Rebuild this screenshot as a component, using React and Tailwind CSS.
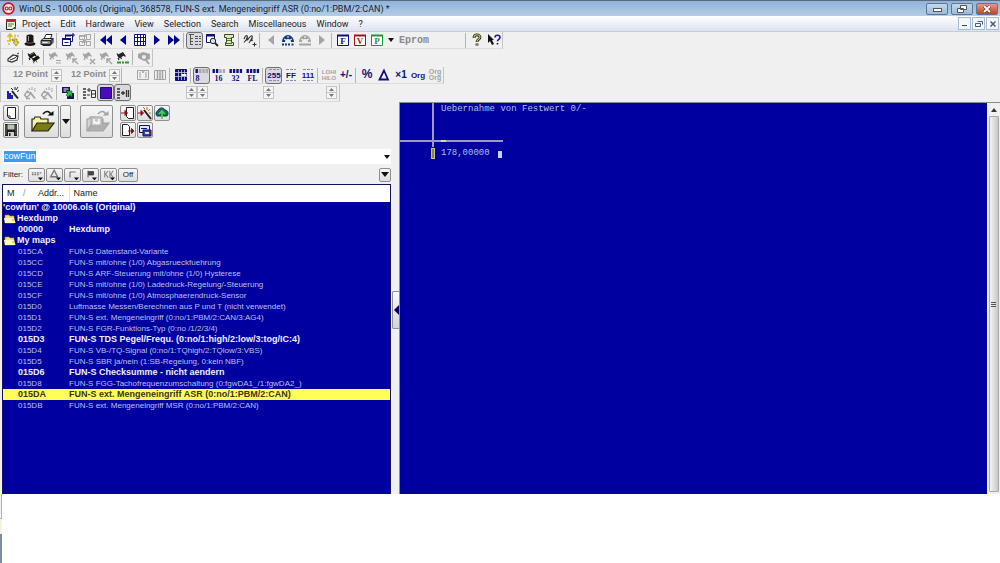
import React from 'react';
import clsx from 'clsx';

const NAVY = '#10107a';
const GRAY = '#a4a4a4';

/* ---------- icons ---------- */

function Ico({ children, className = 'h-[14px] w-[14px]' }) {
  return (
    <svg viewBox="0 0 14 14" className={clsx('shrink-0', className)} fill="none" stroke="none" aria-hidden="true">
      {children}
    </svg>
  );
}

const HandIcon = () => (
  <Ico>
    <path d="M4 1v7M1.500 4L4 1l2.500 3M1 8h4" stroke="#d8c010" strokeWidth="1.600" />
    <path d="M6 6h5v3h2l-3 4-3-4h1.500V7.500H6z" fill="#e8d838" stroke="#8a7a20" strokeWidth=".7" />
    <path d="M9 1.500v3M11 3h2M3 10v2" stroke="#b0a030" />
  </Ico>
);

const HatIcon = () => (
  <Ico>
    <path d="M3.500 3c0-2 7-2 7 0v6.500c3 0 3 3.500-3.500 3.500S.500 9.500 3.500 9.500z" fill="#161616" />
    <path d="M5.500 3v5" stroke="#9a9a9a" />
    <path d="M3.500 9c2 1.500 5 1.500 7 0" stroke="#8a5a20" />
  </Ico>
);

const PrinterIcon = () => (
  <Ico>
    <path d="M4 6l2-4.500h6L10.500 6" fill="#fff" stroke="#222" />
    <path d="M1 7.500L3.500 5.500h9.500L11 7.500z" fill="#c8c8c8" stroke="#222" />
    <path d="M1 7.500h10v4H1zM11 7.500l2-2v4l-2 2z" fill="#8c8c8c" stroke="#222" />
    <path d="M2.500 9.500h5" stroke="#eee" />
    <path d="M2.500 12.500h8" stroke="#222" />
  </Ico>
);

const WindowsIcon = ({ c = NAVY }) => (
  <Ico>
    <path d="M4.500 2.500h7v6h-7z" fill="#fff" stroke={c} />
    <path d="M4 2.500h6" stroke={c} strokeWidth="2" />
    <path d="M1.500 5.500h8v7h-8z" fill="#fff" stroke={c} />
    <path d="M1 6h9" stroke={c} strokeWidth="2" />
    <path d="M3.500 9.500h4" stroke={c} />
    <path d="M12 0v4M10 2h4" stroke={c} />
  </Ico>
);

const MapsIcon = ({ c = GRAY }) => (
  <Ico>
    <path d="M1.500 2.500h5v4h-5zM8.500 1.500h4v5h-4zM1.500 8.500h5v4h-5zM8.500 8.500h4v4h-4z" stroke={c} />
    <path d="M1 3h5M4 6l5 4M9 6l-5 4M7 1v3" stroke={c} strokeWidth="1.300" />
  </Ico>
);

const Arrow = ({ dir, double, c = '#00008c' }) => (
  <Ico>
    <g transform={dir === 'right' ? 'rotate(180 7 7)' : undefined} fill={c}>
      {double ? <path d="M7 2v10L1 7zM13 2v10L7 7z" /> : <path d="M10 2v10L4 7z" />}
    </g>
  </Ico>
);

const GridIcon = ({ solid }) => (
  <Ico>
    <path d="M1.500 1.500h11v11h-11z" fill={solid ? NAVY : '#fff'} stroke={NAVY} />
    <path
      d="M1 4.500h12M1 8.500h12M4.500 2v10M7.500 2v10M10.500 2v10"
      stroke={solid ? '#c8c8e8' : NAVY}
      strokeWidth={solid ? 0.8 : 1}
    />
    {solid && <path d="M7.500 6h5v2h-5z" fill="#fff" />}
  </Ico>
);

const ListIcon = () => (
  <Ico>
    <path d="M1 1.500h5M2.500 2v10M3 5.500h2M3 8.500h2M3 11.500h2" stroke="#555" />
    <path d="M7 3.500h6M7 5.500h6M7 8.500h6M7 11.500h6" stroke="#555" strokeDasharray="3 1" />
  </Ico>
);

const PreviewIcon = () => (
  <Ico>
    <path d="M1.500 1.500h8v8h-8z" fill="#fff" stroke={NAVY} />
    <path d="M1 2.500h9" stroke={NAVY} strokeWidth="2" />
    <circle cx="8" cy="8" r="2.700" fill="#cfe0f4" stroke="#222" />
    <path d="M10 10l3 3" stroke="#222" strokeWidth="1.800" />
  </Ico>
);

const ScrollIcon = () => (
  <Ico>
    <path d="M2.500 1.500h9v3h-2v5h2v3h-8v-3h1v-5h-2z" fill="#dfe8c0" stroke="#3a4a20" />
    <path d="M5 5.500h4M5 7.500h4M4 10.500h6" stroke="#4a7a30" />
  </Ico>
);

const WaveIcon = () => (
  <Ico>
    <path d="M1 6c2-5 4-4 3-1s0 3 2 0 4-3 3 0-1 3 1 2" stroke="#333" strokeWidth="1.200" />
    <path d="M1 9.500l4-5M6 10l3-5M9.500 11.500h4M11.500 9.500v4" stroke="#333" strokeWidth="1.100" />
  </Ico>
);

const BinocularIcon = ({ c = '#123a7a', text }) => (
  <Ico>
    <path d="M1 9c0-4 3-7 6-7s6 3 6 7h-3c0-2-1-3-3-3s-3 1-3 3z" fill={c} />
    <path d="M3 6l2 1M9 7l2-1M7 3v2" stroke="#fff" />
    <path d={text ? 'M1 11.500h2M4 11.500h2M7 11.500h2M10.500 11.500h2' : 'M1 11.500h12'} stroke={c} strokeWidth="2" />
  </Ico>
);

const LetterIcon = ({ ch, c }) => (
  <Ico>
    <path d="M1.500 2.500h11v10h-11z" fill="#fff" stroke={c} />
    <path d="M1 2.500h12" stroke={c} strokeWidth="2" />
    <text x="7" y="11" textAnchor="middle" fontSize="9" fontWeight="700" fontFamily="Liberation Serif, serif" fill={c}>
      {ch}
    </text>
  </Ico>
);

const HelpIcon = ({ pointer }) => (
  <Ico>
    {pointer ? (
      <>
        <path d="M1 1l6 6H5l2 4-2 1-2-4-2 2z" fill="#111" />
        <path d="M8 4.500c0-3 5-3 5 0 0 1.800-2.500 1.800-2.500 3.800M10.500 10v1.500" stroke="#1a1a8c" strokeWidth="1.600" />
      </>
    ) : (
      <>
        <path d="M4 5c0-4 6-4 6-.500 0 2-3 2-3 4.500M7 10.500v2" stroke="#222" strokeWidth="2.800" />
        <path d="M4 4.800c0-4 6-4 6-.500 0 2-3 2-3 4.500M7 11v1" stroke="#cfd060" strokeWidth="1.100" />
      </>
    )}
  </Ico>
);

const PlugIcon = () => (
  <Ico>
    <path d="M2 8l5-4 5 1-1 4-5 2-4-1z" stroke="#333" strokeWidth="1.200" />
    <path d="M4 9l5-2 2-2M11 3l2-1" stroke="#333" />
  </Ico>
);

const ChipIcon = ({ c = GRAY, mark }) => (
  <Ico>
    <path d="M1 4l6-3 2 3-6 3.500z" fill={c} />
    <path d="M2 7l1 2M4.500 6l1 2M8 4l1.500 1.500M1 2.500L2 4" stroke={c} strokeWidth="1.200" />
    {mark === 'eq' && <path d="M8 9.500h5M8 12h5" stroke={c} />}
    {mark === 'x' && <path d="M8 8l5 5M13 8l-5 5" stroke={c} strokeWidth="1.400" />}
    {mark === 'arrow' && <path d="M8 8l5 5M8 12V8h4" stroke={c} strokeWidth="1.400" />}
    {mark === 'go' && <path d="M1 11.500h4M6 11.500h2M9 11.500h4" stroke="#2b9a2b" strokeWidth="2" />}
    {mark === 'double' && (
      <>
        <path d="M5 8l6-3.500 2 2.500-6 4z" fill={c} />
        <path d="M6 10l1 2.500M9 9l1 2.500M3 4l4-2" stroke="#6b7a20" />
      </>
    )}
  </Ico>
);

const FindGray = () => (
  <Ico>
    <path d="M1 3l5-2 7 2v5l-6 2-6-3z" fill={GRAY} />
    <circle cx="7" cy="6" r="2" fill="#eee" />
    <path d="M8 8l4 5" stroke={GRAY} strokeWidth="2" />
  </Ico>
);

const BracketIcon = ({ split }) => (
  <Ico>
    <path d="M1.500 2.500h11v9h-11z" stroke={GRAY} />
    <path d={split ? 'M4.500 3v8M7 3v8M9.500 3v8' : 'M4 4v6M10 4v6M6 3l1 2 1-2'} stroke={GRAY} strokeWidth={split ? 1.5 : 1} />
  </Ico>
);

// bit width icons: row of ticks above a number
const BitsIcon = ({ n, on }) => (
  <Ico className="h-[14px] w-[15px]">
    {[0, 1, 2, 3].map((i) => (
      <path key={i} d={`M${1 + i * 3.4} 1h2.400v4h-2.400z`} fill={i < on ? NAVY : '#a9a9a9'} />
    ))}
    <text
      x={n === '8' ? 3 : 7}
      y="13"
      textAnchor="middle"
      fontSize="8"
      fontWeight="700"
      fontFamily="Liberation Serif, serif"
      fill={NAVY}
    >
      {n}
    </text>
  </Ico>
);

const MiniText = ({ lines, c = NAVY, size = 8 }) => (
  <Ico className="h-[14px] w-[14px] overflow-visible">
    {lines.map((t, i) => (
      <text
        key={i}
        x="7"
        y={lines.length === 1 ? 10 : 6 + i * 6}
        textAnchor="middle"
        fontSize={size}
        fontWeight="700"
        fontFamily="Liberation Sans, sans-serif"
        fill={c}
      >
        {t}
      </text>
    ))}
  </Ico>
);

const NumberIcon = ({ t }) => (
  <Ico className="h-[14px] w-[14px] overflow-visible">
    <path d="M2 1.500h10M2 12.500h10" stroke="#8a8aa8" strokeDasharray="3 1" />
    <text x="7" y="10" textAnchor="middle" fontSize="8" fontWeight="700" fontFamily="Liberation Sans, sans-serif" fill={NAVY}>
      {t}
    </text>
  </Ico>
);

const WandIcon = ({ c = '#222', a = '#2020b8' }) => (
  <Ico>
    <path d="M1 5h2v2h2v2h2v4H1z" fill={a} />
    <path d="M6 5l6 7.500" stroke={c} strokeWidth="2" />
    <path d="M9 1v3M11 5.500l2-1M5 2l2 2M10 4l2-3" stroke={c} />
  </Ico>
);

const WandOffIcon = () => (
  <Ico>
    <path d="M1.500 9l3-4 3 3-4 3.500zM3 12.500h4" stroke={GRAY} strokeWidth="1.400" />
    <path d="M7 6l5 6.500" stroke={GRAY} strokeWidth="2" />
    <path d="M9 1v3M11 5.500l2-1M6 2l1 2M10.500 4l2-2" stroke={GRAY} />
  </Ico>
);

const CopyGreen = () => (
  <Ico>
    <path d="M1 1h8v6H1z" fill="#151550" />
    <path d="M2.500 3h5M2.500 5h3" stroke="#fff" />
    <path d="M6 7h7v6H6z" fill="#151550" />
    <path d="M5 5h6v6L9 9l-2 2-2-2 2-2z" fill="#2cc040" stroke="#0a5a1a" strokeWidth=".6" />
  </Ico>
);

const ColsIcon = ({ plus }) => (
  <Ico>
    <path d="M1 3h3M1 6h3M1 9h3M1 12h3" stroke="#333" strokeWidth="1.600" />
    {plus ? (
      <path d="M5 7h4M7 5v4M10.500 4v7M12.500 4v7" stroke="#333" strokeWidth="1.300" />
    ) : (
      <>
        <path d="M5 4h4M7 2v4M5 9h3" stroke="#333" />
        <path d="M9.500 4.500h4v7h-4zM9.500 8h4" stroke="#333" />
      </>
    )}
  </Ico>
);

const SquareIcon = () => (
  <Ico>
    <path d="M1.500 1.500h11v11h-11z" fill="#4a0cb8" stroke="#14147a" />
  </Ico>
);

const PageIcon = () => (
  <Ico>
    <path d="M3.500 1.500h8v11H5.500l-2-2z" fill="#fff" stroke="#222" />
    <path d="M3.500 10h2.500v2.500" stroke="#222" />
  </Ico>
);

const DiskIcon = () => (
  <Ico>
    <path d="M1 1h12v12H1z" fill="#1c1c1c" />
    <path d="M3.500 1.500h7v5h-7z" fill="#b8c4b0" />
    <path d="M4 9h6v4H4z" fill="#d0d0d0" />
    <path d="M5 10h1.500v3H5z" fill="#222" />
    <path d="M2 2v10M12 2v10" stroke="#6b7050" />
  </Ico>
);

const OpenIcon = ({ off }) => (
  <svg viewBox="0 0 26 26" className="h-[26px] w-[26px]" fill="none" aria-hidden="true">
    <path d="M14 5c3-4 7-3 8 1" stroke={off ? GRAY : '#111'} strokeWidth="1.500" />
    <path d="M18.500 6.500h6V2z" fill={off ? GRAY : '#111'} />
    <path d="M3 22V10h2l1-2h5l1 2h7v4" fill={off ? '#d4d4d4' : '#f6f3a0'} stroke={off ? GRAY : '#222'} strokeWidth="1.200" />
    <path d="M3 22l5-8h17l-6 8z" fill={off ? '#b0b0b0' : '#7c7a14'} stroke={off ? GRAY : '#222'} strokeWidth="1.200" />
    {off && <path d="M7 8h11v9H7z" fill="#c8c8c8" stroke={GRAY} />}
    {off && <path d="M10 10v5M15 10v5M10 12.500l2.500 2 2.500-2" stroke="#fff" strokeWidth="1.400" />}
  </svg>
);

const ImportIcon = ({ out }) => (
  <Ico>
    <path d={out ? 'M1.500 1.500h5l2 2v9h-7z' : 'M5.500 1.500h7v11h-5l-2-2z'} fill="#fff" stroke="#222" />
    {out ? (
      <path d="M7 8h4M13 8l-2.500-2.500v5z" stroke="#8a1020" fill="#8a1020" />
    ) : (
      <path d="M0 7h4M6.500 7L4 4.500v5z" stroke="#8a1020" fill="#8a1020" />
    )}
  </Ico>
);

const MagicIcon = () => (
  <Ico>
    <path d="M0 7h3M5.500 7L3 4.500v5z" stroke="#8a1020" fill="#8a1020" />
    <path d="M6 4l7 9" stroke="#222" strokeWidth="2" />
    <path d="M9 1v3M12 3l-2 2M13 7h-2M5 1l2 2" stroke="#b07a20" />
  </Ico>
);

const CloudIcon = () => (
  <Ico>
    <path d="M1 8c0-3 2-3 3-5 2-2 5-1 6 1 3 0 4 4 2 6H2z" fill="#0f6a70" stroke="#0a3a40" />
    <path d="M7 6v7M4 8l3-3 3 3" stroke="#56d040" strokeWidth="1.600" />
  </Ico>
);

const MailIcon = () => (
  <Ico>
    <path d="M1.500 2.500h10v7h-10z" fill="#dfe6ff" stroke={NAVY} />
    <path d="M3 5.500h6" stroke={NAVY} />
    <path d="M5 7h8v6H5z" fill="#304a9a" stroke={NAVY} />
    <path d="M7 10h4" stroke="#fff" strokeWidth="1.600" />
    <path d="M11 8l2 2-2 2" stroke="#8a1020" />
  </Ico>
);

const FolderIcon = () => (
  <svg viewBox="0 0 12 10" className="h-[10px] w-[12px] shrink-0" aria-hidden="true">
    <path d="M1 1h4l1 1h4v7H1z" fill="#f4e468" stroke="#a08a20" strokeWidth=".6" />
    <path d="M0 4h10l1.500 5H1z" fill="#fffbc0" />
    <path d="M8 6h3" stroke="#c0a830" />
  </svg>
);

const Caret = ({ up, c = '#111' }) => (
  <svg viewBox="0 0 8 5" className="h-[5px] w-[8px]" aria-hidden="true">
    <path d={up ? 'M0 5h8L4 0z' : 'M0 0h8L4 5z'} fill={c} />
  </svg>
);

/* ---------- toolbar pieces ---------- */

function Tool({ label, pressed, disabled, children }) {
  return (
    <button
      type="button"
      aria-label={label}
      disabled={disabled}
      className={clsx(
        'flex h-[17px] w-[17px] shrink-0 items-center justify-center',
        pressed && 'rounded-[3px] border border-[#6f6f6f] bg-[#d9d9de]'
      )}
    >
      {children}
    </button>
  );
}

const Sep = () => <span className="mr-[2px] ml-[1px] h-[15px] w-px shrink-0 bg-[#b4b4b4]" />;

function Bar({ label, children }) {
  return (
    <div
      role="toolbar"
      aria-label={label}
      className="flex h-full w-max items-center border-r border-b border-[#c4c4c4] border-b-[#dcdcdc] pl-[3px]"
    >
      {children}
    </div>
  );
}

function Spinner({ label }) {
  return (
    <span className="flex h-[13px] w-[11px] shrink-0 flex-col border border-[#c4c4c4] bg-[#f4f4f4]">
      <button type="button" disabled aria-label={`${label} up`} className="flex flex-1 items-center justify-center">
        <svg viewBox="0 0 5 3" className="h-[3px] w-[5px]"><path d="M0 3h5L2.500 0z" fill="#777" /></svg>
      </button>
      <button
        type="button"
        disabled
        aria-label={`${label} down`}
        className="flex flex-1 items-center justify-center border-t border-[#c4c4c4]"
      >
        <svg viewBox="0 0 5 3" className="h-[3px] w-[5px]"><path d="M0 0h5L2.500 3z" fill="#777" /></svg>
      </button>
    </span>
  );
}

function PointField({ label }) {
  return (
    <div className="ml-[9px] flex items-center gap-[1px]">
      <input
        aria-label={label}
        disabled
        defaultValue="12 Point"
        className="w-[37px] bg-transparent text-[9px] font-bold text-[#8a8a8a]"
      />
      <Spinner label={label} />
    </div>
  );
}

function SideButton({ label, className, children }) {
  return (
    <button
      type="button"
      aria-label={label}
      className={clsx(
        'flex items-center justify-center rounded-[2px] border border-[#8f8f8f] bg-linear-to-b from-[#f6f6f6] to-[#dedede]',
        className
      )}
    >
      {children}
    </button>
  );
}

/* ---------- window parts ---------- */

function TitleBar() {
  const btn = 'flex h-[12px] w-[22px] items-center justify-center rounded-[2px] border border-[#5f7690]';
  return (
    <header className="flex h-[16px] items-center border-t border-[#5a6b80] bg-linear-to-b from-[#8fb4dc] to-[#b4cce6] pr-[2px] pl-[2px]">
      <svg viewBox="0 0 14 14" className="h-[13px] w-[13px]" aria-hidden="true">
        <circle cx="7" cy="7" r="5.800" fill="#f6e6e6" stroke="#c01828" strokeWidth="1.800" />
        <circle cx="5" cy="7" r="1.600" fill="none" stroke="#c01828" strokeWidth="1.200" />
        <circle cx="9" cy="7" r="1.600" fill="none" stroke="#c01828" strokeWidth="1.200" />
      </svg>
      <h1 className="ml-[4px] font-[Roboto,sans-serif] text-[9px] leading-[14px] whitespace-nowrap text-[#1a2430]">
        WinOLS - 10006.ols (Original), 368578, FUN-S ext. Mengeneingriff ASR (0:no/1:PBM/2:CAN) *
      </h1>
      <div className="ml-auto flex gap-[3px]">
        <button type="button" aria-label="Minimize" className={clsx(btn, 'bg-linear-to-b from-[#c4d8ec] to-[#9cbad8]')}>
          <span className="mt-[3px] h-[4px] w-[9px] border border-[#555] bg-white" />
        </button>
        <button type="button" aria-label="Restore" className={clsx(btn, 'bg-linear-to-b from-[#c4d8ec] to-[#9cbad8]')}>
          <svg viewBox="0 0 10 8" className="h-[8px] w-[10px]">
            <path d="M3.500.500h6v4h-6zM.500 3.500h6v4h-6z" fill="#fff" stroke="#555" />
          </svg>
        </button>
        <button type="button" aria-label="Close" className={clsx(btn, 'bg-linear-to-b from-[#e09a88] to-[#c04028]')}>
          <svg viewBox="0 0 10 8" className="h-[8px] w-[10px]">
            <path d="M2 1l6 6M8 1L2 7" stroke="#5a2018" strokeWidth="3" />
            <path d="M2 1l6 6M8 1L2 7" stroke="#fff" strokeWidth="1.800" />
          </svg>
        </button>
      </div>
    </header>
  );
}

const MENU = ['Project', 'Edit', 'Hardware', 'View', 'Selection', 'Search', 'Miscellaneous', 'Window', '?'];

function MenuBar() {
  const btn = 'flex h-[13px] w-[13px] items-center justify-center border border-[#a8bcd4] bg-[#f4f8fc]';
  return (
    <nav className="flex h-[16px] items-center border-b border-[#c8ccd8] bg-linear-to-b from-white to-[#dde2f0] pr-[1px] pl-[5px]">
      <svg viewBox="0 0 12 12" className="h-[12px] w-[12px]" aria-hidden="true">
        <path d="M1.500 1.500h9v7l-3 3h-6z" fill="#eef0d8" stroke="#222" />
        <path d="M1 1h10v3H1z" fill="#b82838" />
        <path d="M3 6h6M3 8h4" stroke="#3a8a3a" />
        <path d="M7 11l4-3v3z" fill="#2a6a2a" />
      </svg>
      <ul className="ml-[5px] flex gap-[10px] font-[Roboto,sans-serif] text-[9px] leading-[14px] text-[#222]">
        {MENU.map((m) => (
          <li key={m}>
            <button type="button">{m}</button>
          </li>
        ))}
      </ul>
      <div className="ml-auto flex gap-[1px]">
        <button type="button" aria-label="Minimize document" className={btn}>
          <span className="mt-[4px] h-px w-[5px] bg-[#444]" />
        </button>
        <button type="button" aria-label="Restore document" className={btn}>
          <svg viewBox="0 0 8 8" className="h-[8px] w-[8px]">
            <path d="M2.500 1.500h5v3M.500 3.500h5v3h-5z" fill="none" stroke="#4a5a70" />
          </svg>
        </button>
        <button type="button" aria-label="Close document" className={btn}>
          <svg viewBox="0 0 8 8" className="h-[8px] w-[8px]">
            <path d="M1.500 1.500l5 5M6.500 1.500l-5 5" stroke="#4a5a70" strokeWidth="1.500" />
          </svg>
        </button>
      </div>
    </nav>
  );
}

function Toolbars() {
  return (
    <div className="grid grid-rows-[17px_18px_17px_18px] border-l border-[#c4c4c4] bg-[#f0f0f0]">
      <Bar label="Standard">
        <Tool label="Import"><HandIcon /></Tool>
        <Tool label="Wizard"><HatIcon /></Tool>
        <Tool label="Print"><PrinterIcon /></Tool>
        <Sep />
        <Tool label="Windows"><WindowsIcon /></Tool>
        <Tool label="Compare" disabled><MapsIcon /></Tool>
        <Sep />
        <Tool label="First"><Arrow dir="left" double /></Tool>
        <Tool label="Previous"><Arrow dir="left" /></Tool>
        <Tool label="Table"><GridIcon /></Tool>
        <Tool label="Next"><Arrow dir="right" /></Tool>
        <Tool label="Last"><Arrow dir="right" double /></Tool>
        <Sep />
        <Tool label="Map list" pressed><ListIcon /></Tool>
        <Tool label="Preview"><PreviewIcon /></Tool>
        <Tool label="Script"><ScrollIcon /></Tool>
        <Sep />
        <Tool label="Signature"><WaveIcon /></Tool>
        <Sep />
        <Tool label="Find previous" disabled><Arrow dir="left" c={GRAY} /></Tool>
        <Tool label="Find map"><BinocularIcon text /></Tool>
        <Tool label="Find again" disabled><BinocularIcon c={GRAY} /></Tool>
        <Tool label="Find next" disabled><Arrow dir="right" c={GRAY} /></Tool>
        <Sep />
        <Tool label="Factor"><LetterIcon ch="F" c={NAVY} /></Tool>
        <Tool label="Value"><LetterIcon ch="V" c="#a01414" /></Tool>
        <Tool label="Parameter"><LetterIcon ch="P" c="#1c9a2c" /></Tool>
        <button type="button" aria-label="More" className="flex w-[11px] justify-center">
          <svg viewBox="0 0 6 4" className="h-[4px] w-[6px]"><path d="M0 0h6L3 4z" fill="#111" /></svg>
        </button>
        <span className="w-[68px] pl-[3px] font-['Liberation_Mono',monospace] text-[10px] font-bold text-[#8a8a8a]">Eprom</span>
        <Sep />
        <Tool label="Help"><HelpIcon /></Tool>
        <Tool label="Context help"><HelpIcon pointer /></Tool>
      </Bar>

      <Bar label="Hardware">
        <Tool label="Connect"><PlugIcon /></Tool>
        <Sep />
        <Tool label="Read chip"><ChipIcon c="#151515" mark="double" /></Tool>
        <Sep />
        <Tool label="Verify chip" disabled><ChipIcon mark="eq" /></Tool>
        <Tool label="Program chip" disabled><ChipIcon mark="arrow" /></Tool>
        <Tool label="Erase chip" disabled><ChipIcon mark="x" /></Tool>
        <Tool label="Send chip" disabled><ChipIcon mark="arrow" /></Tool>
        <Tool label="Chip range"><ChipIcon c="#222" mark="go" /></Tool>
        <Sep />
        <Tool label="Find chip" disabled><FindGray /></Tool>
      </Bar>

      <Bar label="View">
        <PointField label="Font size" />
        <PointField label="Column size" />
        <Sep />
        <span className="w-[10px]" />
        <Tool label="Fit" disabled><BracketIcon /></Tool>
        <Tool label="Split" disabled><BracketIcon split /></Tool>
        <Sep />
        <Tool label="Grid"><GridIcon solid /></Tool>
        <Sep />
        <Tool label="8 bit" pressed><BitsIcon n="8" on={1} /></Tool>
        <Tool label="16 bit"><BitsIcon n="16" on={2} /></Tool>
        <Tool label="32 bit"><BitsIcon n="32" on={4} /></Tool>
        <Tool label="Float"><BitsIcon n="FL" on={4} /></Tool>
        <Sep />
        <Tool label="Decimal" pressed><NumberIcon t="255" /></Tool>
        <Tool label="Hex"><NumberIcon t="FF" /></Tool>
        <Tool label="Binary"><NumberIcon t="111" /></Tool>
        <Sep />
        <Tool label="Byte order" disabled><MiniText lines={['LOHI', 'HILO']} c={GRAY} size={6} /></Tool>
        <Tool label="Sign"><MiniText lines={['+/-']} size={10} /></Tool>
        <Sep />
        <Tool label="Percent"><MiniText lines={['%']} size={12} /></Tool>
        <Tool label="Difference">
          <Ico><path d="M7 2.500L2.500 11.500h8.500z" stroke={NAVY} strokeWidth="1.800" /></Ico>
        </Tool>
        <Tool label="Times one"><MiniText lines={['×1']} size={10} /></Tool>
        <Tool label="Original"><MiniText lines={['Org']} size={8} /></Tool>
        <Tool label="Original of original" disabled><MiniText lines={['Org', 'Org']} c={GRAY} size={7} /></Tool>
      </Bar>

      <Bar label="Edit">
        <Tool label="Potential maps"><WandIcon /></Tool>
        <Tool label="Wand" disabled><WandOffIcon /></Tool>
        <Tool label="Wand all" disabled><WandOffIcon /></Tool>
        <Sep />
        <Tool label="Copy map"><CopyGreen /></Tool>
        <Sep />
        <Tool label="Columns"><ColsIcon /></Tool>
        <Tool label="Background" pressed><SquareIcon /></Tool>
        <Tool label="Insert columns" pressed><ColsIcon plus /></Tool>
        <div className="ml-[55px] flex">
          <Spinner label="Width" />
          <Spinner label="Height" />
        </div>
        <div className="ml-[55px] flex"><Spinner label="Offset" /></div>
        <div className="mr-[2px] ml-[52px] flex"><Spinner label="Step" /></div>
      </Bar>
    </div>
  );
}

const ROWS = [
  ['015CA', 'FUN-S Datenstand-Variante'],
  ['015CC', 'FUN-S mit/ohne (1/0) Abgasrueckfuehrung'],
  ['015CD', 'FUN-S ARF-Steuerung mit/ohne (1/0) Hysterese'],
  ['015CE', 'FUN-S mit/ohne (1/0) Ladedruck-Regelung/-Steuerung'],
  ['015CF', 'FUN-S mit/ohne (1/0) Atmosphaerendruck-Sensor'],
  ['015D0', 'Luftmasse Messen/Berechnen aus P und T (nicht verwendet)'],
  ['015D1', 'FUN-S ext. Mengeneingriff (0:no/1:PBM/2:CAN/3:AG4)'],
  ['015D2', 'FUN-S FGR-Funktions-Typ (0:no /1/2/3/4)'],
  ['015D3', 'FUN-S TDS Pegel/Frequ. (0:no/1:high/2:low/3:tog/IC:4)', 'bold'],
  ['015D4', 'FUN-S VB-/TQ-Signal (0:no/1:TQhigh/2:TQlow/3:VBS)'],
  ['015D5', 'FUN-S SBR ja/nein (1:SB-Regelung, 0:kein NBF)'],
  ['015D6', 'FUN-S Checksumme - nicht aendern', 'bold'],
  ['015D8', 'FUN-S FGG-Tachofrequenzumschaltung (0:fgwDA1_/1:fgwDA2_)'],
  ['015DA', 'FUN-S ext. Mengeneingriff ASR (0:no/1:PBM/2:CAN)', 'selected'],
  ['015DB', 'FUN-S ext. Mengeneingriff MSR (0:no/1:PBM/2:CAN)'],
];

function GroupRow({ children }) {
  return (
    <tr className="h-[11px] font-bold text-[#f0f0fc]">
      <td colSpan={2} className="p-0">
        <div className="flex h-[11px] items-center">{children}</div>
      </td>
    </tr>
  );
}

function MapList() {
  return (
    <div className="ml-[2px] flex flex-1 flex-col border-x border-t border-[#14145a] bg-[#0000a0]">
      <table className="w-full table-fixed border-collapse text-left leading-[11px] whitespace-nowrap">
        <colgroup>
          <col className="w-[66px]" />
          <col />
        </colgroup>
        <thead>
          <tr className="h-[17px] bg-white text-[9px] text-[#222]">
            <th className="border-r border-[#e0e0e8] p-0 font-normal">
              <span className="flex pl-[4px]">
                <span className="w-[16px]">M</span>
                <span className="w-[15px] text-[#999]">/</span>
                <span>Addr...</span>
              </span>
            </th>
            <th className="p-0 pl-[4px] font-normal">Name</th>
          </tr>
        </thead>
        <tbody className="text-[9px]">
          <GroupRow>'cowfun' @ 10006.ols (Original)</GroupRow>
          <GroupRow><span className="mr-[1px] ml-[1px]"><FolderIcon /></span>Hexdump</GroupRow>
          <tr className="h-[11px] font-bold text-[#f0f0fc]">
            <td className="p-0 pl-[15px]">00000</td>
            <td className="p-0">Hexdump</td>
          </tr>
          <GroupRow><span className="mr-[1px] ml-[1px]"><FolderIcon /></span>My maps</GroupRow>
          {ROWS.map(([addr, name, kind]) => (
            <tr
              key={addr}
              className={clsx(
                'h-[11px]',
                kind && 'font-bold',
                kind === 'bold' && 'text-[#f0f0fc]',
                kind === 'selected' && 'bg-[#ffff58] text-[#3a3410]',
                !kind && 'text-[8px] text-[#bcc0ec]'
              )}
            >
              <td className="p-0 pl-[15px]">{addr}</td>
              <td className="p-0">{name}</td>
            </tr>
          ))}
        </tbody>
      </table>
    </div>
  );
}

const FILTERS = [
  ['Filter by size', <path key="p" d="M1 4.500h2M4 4.500h2M7 4.500h2M10 4.500h2M1 6.500h2M4 6.500h2M7 6.500h2" stroke="#777" strokeWidth="1.500" />],
  ['Filter by difference', <path key="p" d="M6 1.500L2 9h8z" stroke="#777" strokeWidth="1.600" />],
  ['Filter by axis', <path key="p" d="M3.500 10V3.500H10" stroke="#777" strokeWidth="1.400" />],
  ['Filter by flag', <path key="p" d="M3.500 2v8M4 3h6v4H4z" stroke="#444" fill="#444" />],
  ['Filter by text', <path key="p" d="M2 2v8M6 2L3 6l3 4M8 2v8M12 2L9 6l3 4" stroke="#888" strokeWidth="1.300" />],
];

function SidePanel() {
  return (
    <aside className="flex w-[391px] shrink-0 flex-col bg-[#f0f0f0]">
      <div className="flex gap-[5px] px-[3px] pt-[3px]">
        <div className="flex flex-col gap-[1px]">
          <SideButton label="New" className="h-[16px] w-[16px]"><PageIcon /></SideButton>
          <SideButton label="Save" className="h-[16px] w-[16px]"><DiskIcon /></SideButton>
        </div>
        <div className="flex gap-[1px]">
          <SideButton label="Open" className="h-[33px] w-[35px]"><OpenIcon /></SideButton>
          <SideButton label="Open recent" className="h-[33px] w-[11px]"><Caret /></SideButton>
        </div>
        <SideButton label="Open version" className="ml-[4px] h-[33px] w-[33px]"><OpenIcon off /></SideButton>
        <div className="ml-[2px] grid grid-cols-3 content-start gap-[1px]">
          <SideButton label="Import file" className="h-[16px] w-[16px]"><ImportIcon /></SideButton>
          <SideButton label="Import wizard" className="h-[16px] w-[16px]"><MagicIcon /></SideButton>
          <SideButton label="Online" className="h-[16px] w-[16px]"><CloudIcon /></SideButton>
          <SideButton label="Export file" className="h-[16px] w-[16px]"><ImportIcon out /></SideButton>
          <SideButton label="Send" className="h-[16px] w-[16px]"><MailIcon /></SideButton>
        </div>
      </div>

      <div className="mt-[11px] ml-[2px] flex h-[15px] items-center bg-white pl-[2px]">
        <input
          aria-label="Search maps"
          defaultValue="cowFun"
          className="h-[11px] w-[32px] bg-[#3c9af0] text-[9px] leading-[11px] text-white"
        />
        <button type="button" aria-label="Search history" className="ml-auto flex w-[8px] justify-center">
          <svg viewBox="0 0 6 4" className="h-[4px] w-[6px]"><path d="M0 0h6L3 4z" fill="#111" /></svg>
        </button>
      </div>

      <div className="flex h-[20px] items-center pt-[1px] pl-[3px] text-[8px] text-[#222]">
        <span className="w-[25px]">Filter:</span>
        <div className="flex gap-[1px]">
          {FILTERS.map(([label, shape]) => (
            <SideButton key={label} label={label} className="h-[14px] w-[17px]">
              <Ico className="h-[12px] w-[14px]">
                {shape}
                <path d="M8 10h6l-3 3z" fill="#111" />
              </Ico>
            </SideButton>
          ))}
          <SideButton label="Filter off" className="h-[14px] w-[20px]">Off</SideButton>
        </div>
        <SideButton label="Filter options" className="ml-auto h-[14px] w-[12px]"><Caret /></SideButton>
      </div>

      <MapList />
    </aside>
  );
}

function Splitter() {
  return (
    <div className="w-[9px] shrink-0 border-r border-[#8a8a94] bg-[#f0f0f0] pt-[189px] pl-[1px]">
      <button
        type="button"
        aria-label="Collapse panel"
        className="flex h-[38px] w-[7px] items-center justify-end rounded-l-[2px] border border-r-0 border-[#909090] bg-linear-to-b from-[#fafafa] to-[#d4d4d4]"
      >
        <svg viewBox="0 0 5 10" className="h-[10px] w-[5px]"><path d="M5 0v10L0 5z" fill="#00006a" /></svg>
      </button>
    </div>
  );
}

function MapView() {
  return (
    <main className="flex min-w-0 flex-1 border-t border-[#8a8a94] bg-[#0000a0] font-['Liberation_Mono',monospace] text-[9px] leading-[11px] text-[#b4bcf0]">
      <div className="flex-1">
        <div className="flex h-[37px]">
          <span className="ml-[32px] w-[2px] bg-[#9c9cb8]" />
          <span className="ml-[7px] pt-[1px]">Uebernahme von Festwert 0/-</span>
        </div>
        <div className="flex h-[2px] w-[103px] bg-[#9c9cb8]">
          <span className="ml-[41px] w-[5px] bg-[#e0dc80]" />
        </div>
        <div className="flex h-[5px]">
          <span className="ml-[32px] w-[2px] bg-[#9c9cb8]" />
        </div>
        <div className="flex h-[12px] items-center">
          <span className="ml-[31px] h-[11px] w-[4px] border border-[#c8c4a0] bg-[#8c8a20]" />
          <span className="ml-[6px]">178,00000</span>
          <span className="mt-[2px] ml-[8px] h-[7px] w-[4px] bg-[#c8d0f4]" />
        </div>
      </div>
      <div className="flex w-[13px] flex-col items-center bg-[#f0f0f0] pb-[2px]">
        <button type="button" aria-label="Scroll up" className="flex h-[13px] w-full items-center justify-center">
          <svg viewBox="0 0 6 4" className="h-[4px] w-[6px]"><path d="M0 4h6L3 0z" fill="#333" /></svg>
        </button>
        <div className="flex w-[10px] flex-1 items-center justify-center rounded-[1px] border border-[#a8a8a8] bg-linear-to-r from-[#f4f4f4] to-[#c8c8c8]">
          <span className="flex flex-col gap-[1px]">
            <span className="h-px w-[5px] bg-[#555]" />
            <span className="h-px w-[5px] bg-[#555]" />
            <span className="h-px w-[5px] bg-[#555]" />
          </span>
        </div>
      </div>
    </main>
  );
}

export default function App() {
  return (
    <div className="flex min-h-screen flex-col bg-white font-['Liberation_Sans',Arial,sans-serif]">
      <TitleBar />
      <MenuBar />
      <Toolbars />
      <div className="flex flex-1">
        <SidePanel />
        <Splitter />
        <MapView />
      </div>
      {/* strip of the desktop that shows below the window */}
      <footer className="flex h-[69px] flex-col">
        <span className="h-[24px] w-[2px] border-r border-[#b4b4b4] bg-[#f0f0f0]" />
        <span className="h-[16px] w-[2px] border-t border-[#b4b4b4] bg-[#f6f2dc]" />
        <span className="w-[2px] flex-1 bg-[#7c8ba4]" />
      </footer>
    </div>
  );
}
